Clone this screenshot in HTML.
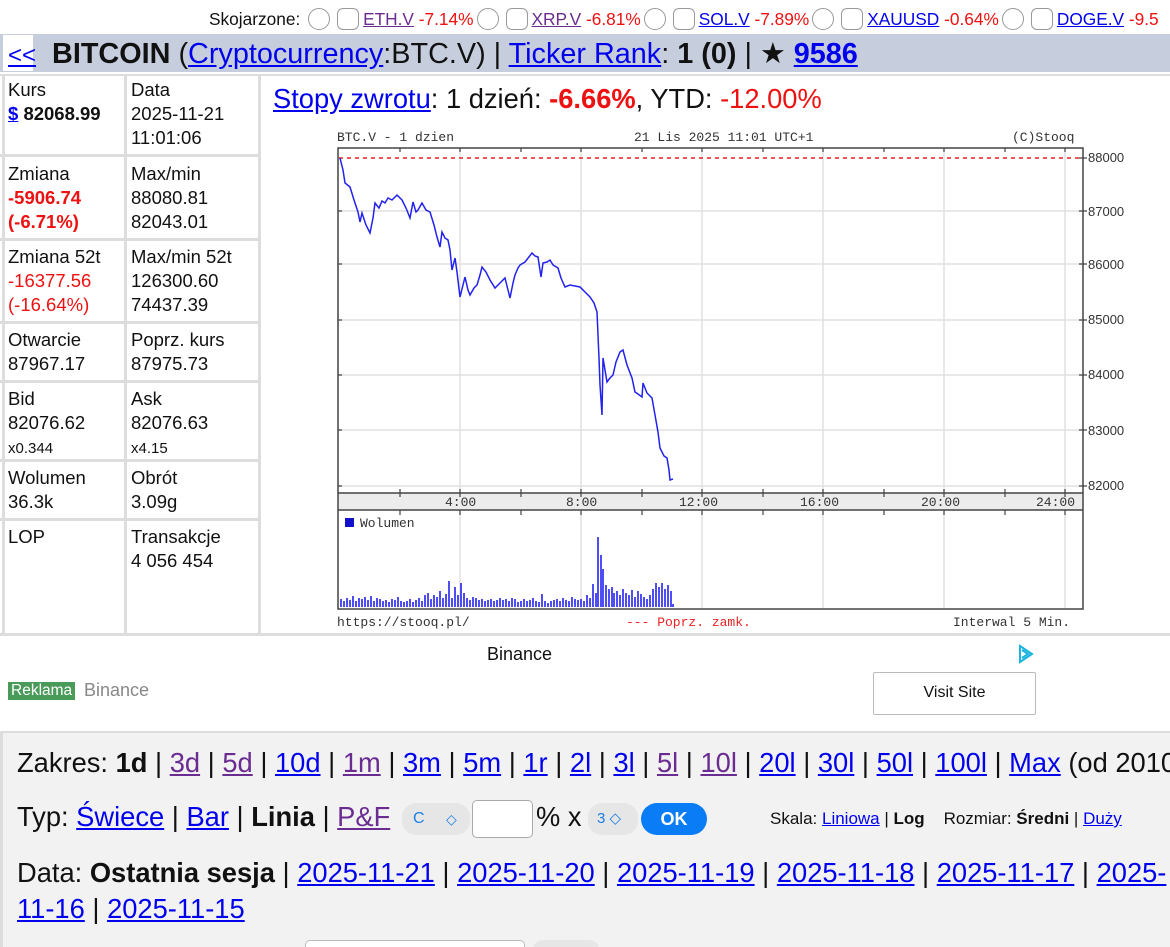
<!DOCTYPE html>
<html><head><meta charset="utf-8"><style>
*{margin:0;padding:0;box-sizing:border-box}
html,body{width:1170px;height:947px;overflow:hidden}
body{background:#fff;font-family:"Liberation Sans",Arial,sans-serif;color:#111;position:relative}
a{color:#0000ee;text-decoration:underline}
a.v{color:#6a2c91}
.abs{position:absolute;white-space:nowrap}
.red{color:#ee1111}
.cb{display:inline-block;width:22px;height:22px;border:1.5px solid #999;vertical-align:-5px;margin:0 4px 0 3px}
.cir{border-radius:50%}
.sq{border-radius:6px}
.cell{position:absolute;font-size:18.5px;line-height:24px;padding-left:8px}
.low{position:absolute;left:0;top:731px;width:1170px;height:216px;background:#f2f2f2;border-left:3px solid #ddd;border-top:2px solid #ddd;overflow:hidden}
.low div{position:absolute;left:14px;white-space:nowrap}
.big{font-size:27.3px;line-height:34px}
</style></head><body>

<div class="abs" style="left:209px;top:8px;font-size:17.3px;line-height:22px">Skojarzone: <span class="cb cir"></span><span class="cb sq"></span><a class="v" href="#">ETH.V</a> <span class="red">-7.14%</span><span class="cb cir"></span><span class="cb sq"></span><a class="v" href="#">XRP.V</a> <span class="red">-6.81%</span><span class="cb cir"></span><span class="cb sq"></span><a href="#">SOL.V</a> <span class="red">-7.89%</span><span class="cb cir"></span><span class="cb sq"></span><a href="#">XAUUSD</a> <span class="red">-0.64%</span><span class="cb cir"></span><span class="cb sq"></span><a href="#">DOGE.V</a> <span class="red">-9.5</span></div>

<div class="abs" style="left:0;top:34px;width:1170px;height:38px;background:#c6cede"></div>
<div class="abs" style="left:3px;top:35px;width:30px;height:36px;background:#fff"></div>
<div class="abs" style="left:8px;top:37px;font-size:28.8px;line-height:34px"><a href="#" style="font-size:24px">&lt;&lt;</a>&nbsp; <b>BITCOIN</b> (<a href="#">Cryptocurrency</a>:BTC.V) | <a href="#">Ticker Rank</a>: <b>1 (0)</b> | ★ <b><a href="#">9586</a></b></div>

<div class="abs" style="left:0;top:74px;width:1170px;height:2px;background:#ddd"></div>
<div class="abs" style="left:2px;top:74px;width:3px;height:562px;background:#ddd"></div>
<div class="abs" style="left:124px;top:74px;width:3px;height:562px;background:#ddd"></div>
<div class="abs" style="left:258px;top:74px;width:3px;height:562px;background:#ddd"></div>
<div class="abs" style="left:0;top:154px;width:260px;height:3px;background:#ddd"></div>
<div class="abs" style="left:0;top:238px;width:260px;height:3px;background:#ddd"></div>
<div class="abs" style="left:0;top:321px;width:260px;height:3px;background:#ddd"></div>
<div class="abs" style="left:0;top:380px;width:260px;height:3px;background:#ddd"></div>
<div class="abs" style="left:0;top:459px;width:260px;height:3px;background:#ddd"></div>
<div class="abs" style="left:0;top:518px;width:260px;height:3px;background:#ddd"></div>
<div class="abs" style="left:0;top:633px;width:1170px;height:3px;background:#ddd"></div>

<div class="cell" style="left:0;top:78px">Kurs<br><a href="#"><b>$</b></a> <b>82068.99</b></div>
<div class="cell" style="left:123px;top:78px">Data<br>2025-11-21<br>11:01:06</div>
<div class="cell" style="left:0;top:162px">Zmiana<br><b class="red">-5906.74<br>(-6.71%)</b></div>
<div class="cell" style="left:123px;top:162px">Max/min<br>88080.81<br>82043.01</div>
<div class="cell" style="left:0;top:245px">Zmiana 52t<br><span class="red">-16377.56<br>(-16.64%)</span></div>
<div class="cell" style="left:123px;top:245px">Max/min 52t<br>126300.60<br>74437.39</div>
<div class="cell" style="left:0;top:328px">Otwarcie<br>87967.17</div>
<div class="cell" style="left:123px;top:328px">Poprz. kurs<br>87975.73</div>
<div class="cell" style="left:0;top:387px">Bid<br>82076.62<br><span style="font-size:15px">x0.344</span></div>
<div class="cell" style="left:123px;top:387px">Ask<br>82076.63<br><span style="font-size:15px">x4.15</span></div>
<div class="cell" style="left:0;top:466px">Wolumen<br>36.3k</div>
<div class="cell" style="left:123px;top:466px">Obrót<br>3.09g</div>
<div class="cell" style="left:0;top:525px">LOP</div>
<div class="cell" style="left:123px;top:525px">Transakcje<br>4 056 454</div>

<div class="abs" style="left:273px;top:83px;font-size:27.3px;line-height:32px"><a href="#">Stopy zwrotu</a>: 1 dzień: <b class="red">-6.66%</b>, YTD: <span class="red">-12.00%</span></div>

<svg class="abs" style="left:330px;top:125px" width="840" height="508" viewBox="330 125 840 508" font-family="Liberation Mono,monospace" font-size="13">
<text x="337" y="141" fill="#333">BTC.V - 1 dzien</text>
<text x="634" y="141" fill="#333">21 Lis 2025 11:01 UTC+1</text>
<text x="1012" y="141" fill="#333">(C)Stooq</text>
<g stroke="#e0e0e0" stroke-width="1.5">
<line x1="339" y1="211" x2="1082" y2="211"/><line x1="339" y1="264" x2="1082" y2="264"/><line x1="339" y1="320" x2="1082" y2="320"/><line x1="339" y1="375" x2="1082" y2="375"/><line x1="339" y1="430" x2="1082" y2="430"/><line x1="339" y1="486" x2="1082" y2="486"/>
<line x1="460" y1="148" x2="460" y2="492"/><line x1="581" y1="148" x2="581" y2="492"/><line x1="702" y1="148" x2="702" y2="492"/><line x1="823" y1="148" x2="823" y2="492"/><line x1="944" y1="148" x2="944" y2="492"/><line x1="1065" y1="148" x2="1065" y2="492"/>
<line x1="460" y1="512" x2="460" y2="608"/><line x1="581" y1="512" x2="581" y2="608"/><line x1="702" y1="512" x2="702" y2="608"/><line x1="823" y1="512" x2="823" y2="608"/><line x1="944" y1="512" x2="944" y2="608"/><line x1="1065" y1="512" x2="1065" y2="608"/>
</g>
<rect x="338" y="493" width="745" height="17" fill="#ececec"/>
<g fill="#333" font-size="13"><text x="445" y="506">4:00</text><text x="566" y="506">8:00</text><text x="679" y="506">12:00</text><text x="800" y="506">16:00</text><text x="921" y="506">20:00</text><text x="1036" y="506">24:00</text></g>
<rect x="338" y="148" width="745" height="461" fill="none" stroke="#444" stroke-width="1.5"/>
<line x1="338" y1="493" x2="1083" y2="493" stroke="#444" stroke-width="1.5"/>
<line x1="338" y1="510" x2="1083" y2="510" stroke="#444" stroke-width="1.5"/>
<g stroke="#444" stroke-width="1.2">
<path d="M400 148v4M460 148v4M521 148v4M581 148v4M642 148v4M702 148v4M763 148v4M823 148v4M884 148v4M944 148v4M1005 148v4M1065 148v4"/>
<path d="M400 489v8M460 489v8M521 489v8M581 489v8M642 489v8M702 489v8M763 489v8M823 489v8M884 489v8M944 489v8M1005 489v8M1065 489v8"/>
<path d="M400 510v5M460 510v5M521 510v5M581 510v5M642 510v5M702 510v5M763 510v5M823 510v5M884 510v5M944 510v5M1005 510v5M1065 510v5"/>
<path d="M338 211h4M338 264h4M338 320h4M338 375h4M338 430h4M338 486h4M1079 158h8M1079 211h8M1079 264h8M1079 320h8M1079 375h8M1079 430h8M1079 486h8"/>
</g>
<line x1="339" y1="158" x2="1082" y2="158" stroke="#ee2222" stroke-width="1.5" stroke-dasharray="4,4"/>
<g font-family="Liberation Sans,sans-serif" font-size="13" fill="#333"><text x="1088" y="162">88000</text><text x="1088" y="216">87000</text><text x="1088" y="269">86000</text><text x="1088" y="324">85000</text><text x="1088" y="379">84000</text><text x="1088" y="435">83000</text><text x="1088" y="490">82000</text></g>
<polyline fill="none" stroke="#2222ee" stroke-width="1.5" points="340,158 343,170 345,183 350,187 354,200 358,212 360,222 362,213 366,225 370,233 373,218 375,203 379,208 382,201 385,203 388,198 392,200 397,195 402,200 406,208 410,218 413,202 416,212 418,210 422,203 426,210 430,212 434,225 437,237 440,247 442,232 445,238 448,240 450,250 452,270 455,258 457,272 460,297 463,285 465,277 468,290 470,295 474,288 477,285 480,275 482,267 486,272 490,280 495,288 500,283 505,278 508,290 510,298 513,283 515,275 518,268 520,265 525,262 532,253 535,256 538,257 541,277 543,263 547,262 550,260 553,265 558,268 561,278 565,287 570,285 575,286 580,287 585,292 590,297 594,303 597,312 599,358 600,385 602,415 603,358 605,370 607,382 610,378 613,375 616,362 620,352 623,350 627,365 632,378 635,392 638,394 642,397 643,383 647,393 652,398 655,415 658,432 660,448 664,456 667,458 669,470 670,480 673,479"/>
<rect x="345" y="518" width="9" height="9" fill="#1111cc"/>
<text x="360" y="527" fill="#333" font-size="13">Wolumen</text>
<path stroke="#2222ee" stroke-width="1.6" d="M341 607v-8M344 607v-6M347 607v-9M350 607v-7M353 607v-11M356 607v-6M359 607v-9M362 607v-8M365 607v-10M368 607v-7M371 607v-11M374 607v-6M377 607v-9M380 607v-8M383 607v-6M386 607v-7M389 607v-5M392 607v-8M395 607v-7M398 607v-10M401 607v-6M404 607v-5M407 607v-6M410 607v-8M413 607v-5M416 607v-7M419 607v-9M422 607v-6M425 607v-12M428 607v-14M431 607v-8M434 607v-12M437 607v-10M440 607v-16M443 607v-9M446 607v-13M449 607v-26M452 607v-9M455 607v-20M458 607v-12M461 607v-24M464 607v-14M467 607v-9M470 607v-7M473 607v-10M476 607v-9M479 607v-7M482 607v-8M485 607v-6M488 607v-7M491 607v-8M494 607v-6M497 607v-7M500 607v-9M503 607v-7M506 607v-8M509 607v-6M512 607v-9M515 607v-8M518 607v-5M521 607v-6M524 607v-8M527 607v-6M530 607v-7M533 607v-9M536 607v-6M539 607v-5M542 607v-13M545 607v-6M548 607v-4M551 607v-6M554 607v-7M557 607v-8M560 607v-6M563 607v-9M566 607v-7M569 607v-6M572 607v-10M575 607v-8M578 607v-7M581 607v-8M584 607v-6M587 607v-12M590 607v-9M593 607v-23M596 607v-14M598 607v-70M601 607v-52M603 607v-38M606 607v-22M609 607v-18M612 607v-20M614 607v-14M617 607v-16M620 607v-12M623 607v-18M626 607v-14M629 607v-12M632 607v-17M635 607v-10M638 607v-16M641 607v-13M644 607v-10M647 607v-8M650 607v-12M653 607v-18M656 607v-24M659 607v-20M662 607v-24M665 607v-18M668 607v-22M671 607v-16M673 607v-3"/>
<text x="337" y="626" fill="#333">https://stooq.pl/</text>
<text x="626" y="626" fill="#ee2222">--- Poprz. zamk.</text>
<text x="953" y="626" fill="#333">Interwal 5 Min.</text>
</svg>

<div class="abs" style="left:487px;top:644px;font-size:18px">Binance</div>
<svg class="abs" style="left:1016px;top:643px" width="20" height="22"><path d="M4 3 L16 11 L4 19 Z M6 7 L12 11 L6 15" fill="none" stroke="#1bb3e0" stroke-width="2"/></svg>
<div class="abs" style="left:8px;top:682px;background:#4a9a5a;color:#fff;font-size:15.5px;padding:0 3px;line-height:18px">Reklama</div>
<div class="abs" style="left:84px;top:680px;font-size:18px;color:#888">Binance</div>
<div class="abs" style="left:873px;top:672px;width:163px;height:43px;border:1.5px solid #bbb;border-radius:2px;font-size:16px;text-align:center;line-height:40px">Visit Site</div>

<div class="low">
<div class="big" style="top:13px">Zakres: <b>1d</b> | <a class="v" href="#">3d</a> | <a class="v" href="#">5d</a> | <a href="#">10d</a> | <a class="v" href="#">1m</a> | <a href="#">3m</a> | <a href="#">5m</a> | <a href="#">1r</a> | <a href="#">2l</a> | <a href="#">3l</a> | <a class="v" href="#">5l</a> | <a class="v" href="#">10l</a> | <a href="#">20l</a> | <a href="#">30l</a> | <a href="#">50l</a> | <a href="#">100l</a> | <a href="#">Max</a> (od 2010</div>
<div class="big" style="top:67px">Typ: <a href="#">Świece</a> | <a href="#">Bar</a> | <b>Linia</b> | <a class="v" href="#">P&amp;F</a></div>
<div style="left:399px;top:70px;width:68px;height:32px;border-radius:14px;background:#e6e6e6;color:#1a7fe8;font-size:16px;line-height:32px;padding-left:11px">C<span style="position:absolute;left:44px;font-size:14px">◇</span></div>
<div style="left:469px;top:67px;width:61px;height:38px;background:#fff;border:1.5px solid #aaa;border-radius:5px"></div>
<div style="left:533px;top:67px;font-size:27.3px;line-height:34px">% x</div>
<div style="left:585px;top:70px;width:50px;height:32px;border-radius:14px;background:#e6e6e6;color:#1a7fe8;font-size:15px;line-height:32px;padding-left:9px">3 ◇</div>
<div style="left:638px;top:70px;width:66px;height:32px;border-radius:16px;background:#0a7cf5;color:#fff;font-weight:bold;font-size:18px;line-height:32px;text-align:center">OK</div>
<div style="left:767px;top:76px;font-size:17px">Skala: <a href="#">Liniowa</a> | <b>Log</b> &nbsp;&nbsp; Rozmiar: <b>Średni</b> | <a href="#">Duży</a></div>
<div class="big" style="top:123px">Data: <b>Ostatnia sesja</b> | <a href="#">2025-11-21</a> | <a href="#">2025-11-20</a> | <a href="#">2025-11-19</a> | <a href="#">2025-11-18</a> | <a href="#">2025-11-17</a> | <a href="#">2025-</a></div>
<div class="big" style="top:159px"><a href="#">11-16</a> | <a href="#">2025-11-15</a></div>
<div style="left:302px;top:207px;width:220px;height:20px;background:#fff;border:1.5px solid #bbb;border-radius:5px"></div>
<div style="left:530px;top:207px;width:66px;height:20px;background:#e6e6e6;border-radius:10px"></div>
</div>
</body></html>
